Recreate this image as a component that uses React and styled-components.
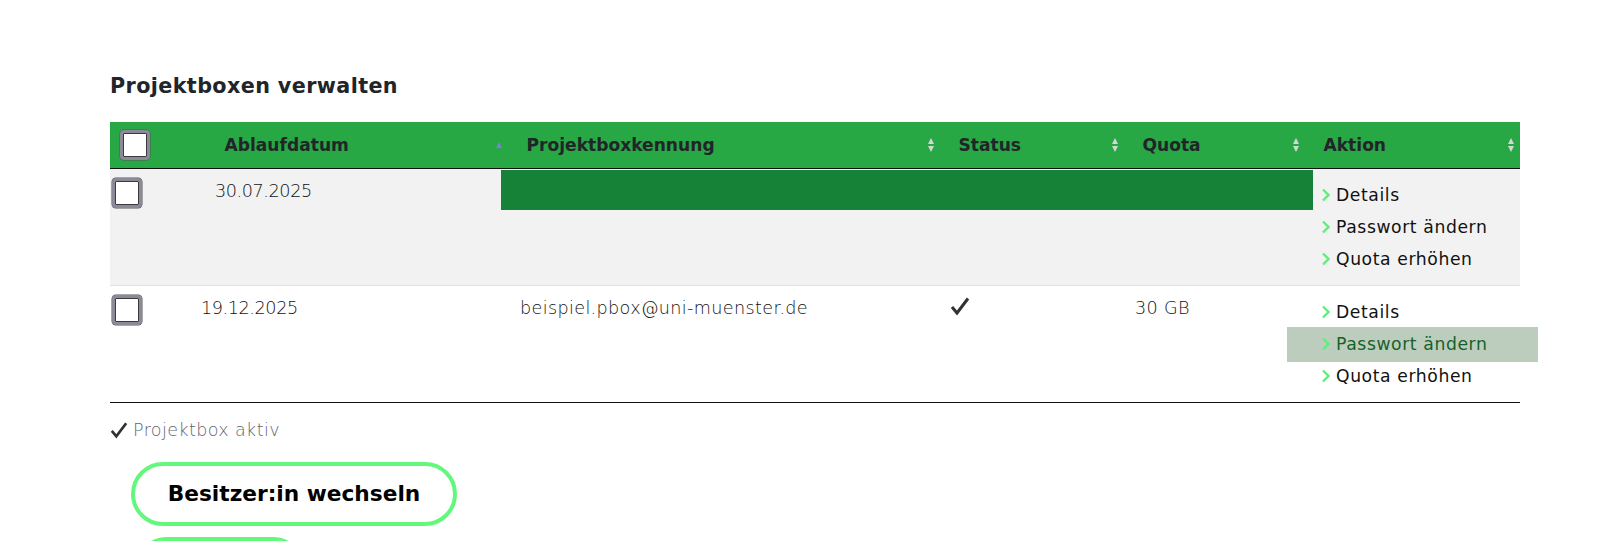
import styled, { createGlobalStyle } from "styled-components";

const GlobalStyle = createGlobalStyle`
  html, body {
    margin: 0;
    padding: 0;
    width: 1600px;
    height: 541px;
    overflow: hidden;
  }
  body {
    background: #fff;
    font-family: "DejaVu Sans", "Noto Sans", sans-serif;
    color: #212529;
  }
`;

const Page = styled.div`
  padding: 75px 80px 0 110px;
  width: 1600px;
  height: 541px;
  box-sizing: border-box;
  overflow: hidden;
`;

const Title = styled.h2`
  margin: 0 0 24px 0;
  font-size: 20.7px;
  letter-spacing: 0.4px;
  line-height: 23px;
  font-weight: 700;
  color: #212529;
`;

const TableWrap = styled.div`
  position: relative;
  width: 1410px;
`;

const Table = styled.table`
  width: 1410px;
  border-collapse: collapse;
  table-layout: fixed;
  border-bottom: 1px solid #111;
`;

const HeadRow = styled.tr`
  background: #28a745;
  height: 46px;
  border-bottom: 1px solid #111;
`;

const Th = styled.th`
  position: relative;
  text-align: left;
  padding: 0 0 0 ${(p) => p.$pad ?? 18.5}px;
  font-size: 17.1px;
  font-weight: 700;
  color: #212529;
  vertical-align: middle;
  white-space: nowrap;
`;

const SortIcon = styled.span`
  position: absolute;
  right: 6px;
  top: 50%;
  transform: translateY(-50%);
  display: flex;
  flex-direction: column;
  gap: 2px;

  & i {
    display: block;
    width: 0;
    height: 0;
    border-left: 3.5px solid transparent;
    border-right: 3.5px solid transparent;
  }
  & i.up {
    border-bottom: 6px solid ${(p) => (p.$active ? "#7b7fd8" : "#cfd8d3")};
  }
  & i.down {
    border-top: 6px solid #cfd8d3;
  }
`;

const BodyRow = styled.tr`
  background: ${(p) => (p.$shade ? "#f2f2f2" : "#fff")};
  border-bottom: 1px solid ${(p) => (p.$last ? "#111" : "#dee2e6")};
`;

const Td = styled.td`
  vertical-align: top;
  padding: 10px 0 10px ${(p) => p.$pad ?? 10}px;
  text-indent: ${(p) => p.$indent ?? 0}px;
  font-size: 17.6px;
  letter-spacing: ${(p) => (p.$tight ? "-0.4px" : "0.35px")};
  line-height: 24px;
  font-weight: 200;
  color: #111;
  white-space: nowrap;
`;

const Check = styled.span`
  display: block;
  box-sizing: border-box;
  width: 30px;
  height: 30px;
  border: 3px solid #8c8a99;
  border-radius: 4px;
  background: #fff;
  margin: ${(p) => (p.$head ? "0" : "-1px 0 0 0")};
  box-shadow: 0 0 0 1px #3a3a3a inset, 0 0 0 0.5px #555;
`;

const Actions = styled.div`
  display: flex;
  flex-direction: column;
`;

const ActionLink = styled.a`
  position: relative;
  isolation: isolate;
  display: flex;
  align-items: center;
  gap: 5px;
  height: 32px;
  margin-left: 6px;
  font-size: 17.2px;
  letter-spacing: 0.6px;
  font-weight: 400;
  color: ${(p) => (p.$active ? "#14622a" : "#111")};
  text-decoration: none;
  cursor: pointer;

  &::before {
    content: "";
    position: absolute;
    z-index: -1;
    left: -34.5px;
    top: -1px;
    width: 251px;
    height: 35px;
    background: ${(p) => (p.$active ? "#bccdbd" : "transparent")};
  }
`;

const Chevron = () => (
  <svg width="10" height="14" viewBox="0 0 10 14">
    <polyline points="2,1.5 7.5,7 2,12.5" fill="none" stroke="#5cf07a" strokeWidth="2.4" />
  </svg>
);

const Tick = ({ size = 20 }) => (
  <svg width={size} height={size} viewBox="0 0 20 20">
    <polyline points="2,11 7,17 18,2.5" fill="none" stroke="#2f3337" strokeWidth="3" strokeLinejoin="miter" />
  </svg>
);

const Overlay = styled.div`
  position: absolute;
  left: 391px;
  top: 48px;
  width: 812px;
  height: 40px;
  background: #168237;
`;

const Legend = styled.div`
  display: flex;
  align-items: center;
  gap: 5px;
  margin-top: 15px;
  height: 24px;
  font-size: 17.5px;
  letter-spacing: 0.4px;
  font-weight: 200;
  color: #5f666d;
`;

const Buttons = styled.div`
  display: flex;
  flex-direction: column;
  align-items: flex-start;
  gap: 11px;
  margin-top: 20px;
`;

const PillButton = styled.button`
  box-sizing: border-box;
  flex-shrink: 0;
  width: ${(p) => p.$w}px;
  height: 64px;
  margin-left: ${(p) => p.$ml}px;
  border: 4px solid #63f87b;
  border-radius: 32px;
  background: #fff;
  font-family: "DejaVu Sans", sans-serif;
  font-size: 21.7px;
  font-weight: 700;
  color: #000;
  cursor: pointer;
`;

const rows = [
  { date: "30.07.2025", indent: 9, mail: "", active: false, quota: "", shade: true },
  { date: "19.12.2025", indent: -5, mail: "beispiel.pbox@uni-muenster.de", active: true, quota: "30 GB", hover: 1 },
];

const actions = ["Details", "Passwort ändern", "Quota erhöhen"];

export default function App() {
  return (
    <>
      <GlobalStyle />
      <Page>
        <Title>Projektboxen verwalten</Title>
        <TableWrap>
          <Table>
            <colgroup>
              <col style={{ width: 96 }} />
              <col style={{ width: 302 }} />
              <col style={{ width: 432 }} />
              <col style={{ width: 184 }} />
              <col style={{ width: 181 }} />
              <col style={{ width: 215 }} />
            </colgroup>
            <thead>
              <HeadRow>
                <Th $pad={10}>
                  <Check $head />
                </Th>
                <Th>
                  Ablaufdatum
                  <SortIcon $active>
                    <i className="up" />
                  </SortIcon>
                </Th>
                <Th>
                  Projektboxkennung
                  <SortIcon>
                    <i className="up" />
                    <i className="down" />
                  </SortIcon>
                </Th>
                <Th>
                  Status
                  <SortIcon>
                    <i className="up" />
                    <i className="down" />
                  </SortIcon>
                </Th>
                <Th>
                  Quota
                  <SortIcon>
                    <i className="up" />
                    <i className="down" />
                  </SortIcon>
                </Th>
                <Th>
                  Aktion
                  <SortIcon>
                    <i className="up" />
                    <i className="down" />
                  </SortIcon>
                </Th>
              </HeadRow>
            </thead>
            <tbody>
              {rows.map((r, i) => (
                <BodyRow key={r.date} $shade={r.shade} $last={i === rows.length - 1}>
                  <Td $pad={2}>
                    <Check />
                  </Td>
                  <Td $pad={0} $indent={r.indent} $tight>{r.date}</Td>
                  <Td $pad={12}>{r.mail}</Td>
                  <Td $pad={10}>{r.active && <Tick />}</Td>
                  <Td $pad={11}>{r.quota}</Td>
                  <Td $pad={10}>
                    <Actions>
                      {actions.map((a, j) => (
                        <ActionLink key={a} $active={r.hover === j}>
                          <Chevron />
                          {a}
                        </ActionLink>
                      ))}
                    </Actions>
                  </Td>
                </BodyRow>
              ))}
            </tbody>
          </Table>
          <Overlay />
        </TableWrap>
        <Legend>
          <Tick size={18} />
          Projektbox aktiv
        </Legend>
        <Buttons>
          <PillButton $w={326} $ml={21}>Besitzer:in wechseln</PillButton>
          <PillButton $w={170} $ml={25} aria-label="Löschen" />
        </Buttons>
      </Page>
    </>
  );
}
